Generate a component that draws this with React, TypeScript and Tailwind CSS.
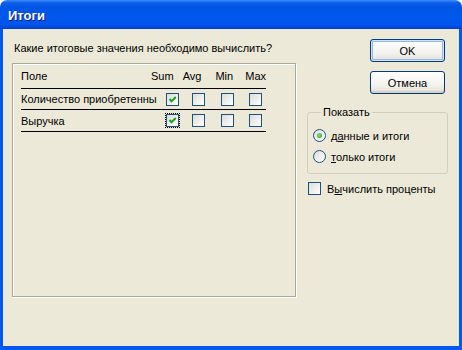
import React from "react";

function Check({ checked, focus }: { checked?: boolean; focus?: boolean }) {
  return (
    <span
      className={
        "flex h-[13px] w-[13px] shrink-0 items-center justify-center border border-[#1C5180] bg-[linear-gradient(135deg,#DCDCD7,#FFFFFF)] " +
        (focus ? "outline-1 outline-dotted outline-black" : "")
      }
    >
      {checked && (
        <svg width="11" height="11" viewBox="0 0 11 11">
          <path d="M2.5 5 L4.5 7.2 L8.8 3" stroke="#21A121" strokeWidth="2" fill="none" />
        </svg>
      )}
    </span>
  );
}

function Radio({ checked }: { checked?: boolean }) {
  return (
    <span className="flex h-[13px] w-[13px] shrink-0 items-center justify-center rounded-full border border-[#1C5180] bg-[linear-gradient(135deg,#DCDCD7,#FFFFFF)]">
      {checked && (
        <span className="h-[5px] w-[5px] rounded-full bg-[radial-gradient(circle_at_40%_40%,#7BE07B,#21A121)]" />
      )}
    </span>
  );
}

const fields = [
  { name: "Количество приобретенны", sum: true, focus: false, h: "h-[21px]" },
  { name: "Выручка", sum: true, focus: true, h: "h-[22px]" },
];

export default function App() {
  return (
    <div className="flex h-[350px] w-[462px] flex-col font-['Liberation_Sans',Arial,sans-serif] text-[11px] text-black">
      {/* title bar */}
      <div className="flex h-[29px] items-center rounded-t-[7px] bg-[linear-gradient(to_bottom,#3D8CFF_0%,#0A5FEA_10%,#0054E3_25%,#0058EE_60%,#0055EA_85%,#0040D0_100%)] pl-[8px] pt-[2px]">
        <span className="text-[13px] font-bold text-white [text-shadow:1px_1px_0_#0A1883]">Итоги</span>
      </div>

      {/* body */}
      <div className="flex flex-1 border-x-[3px] border-b-[4px] border-[#0058EE] bg-[#ECE9D8] pl-[9px] pt-[10px]">
        {/* left side */}
        <div className="flex w-[284px] flex-col">
          <p className="ml-[2px] mt-[2px] h-[22px] leading-[14px]">Какие итоговые значения необходимо вычислить?</p>
          <div className="h-[234px] border border-[#ACA899] pl-[8px] shadow-[inset_1px_1px_0_#fff,1px_1px_0_#fff]">
            <div className="w-[245px]">
              <div className="flex h-[25px] items-center border-b border-black pb-[1px] leading-[14px]">
                <span className="w-[131px]">Поле</span>
                <span className="w-[32px]">Sum</span>
                <span className="w-[33px]">Avg</span>
                <span className="w-[30px]">Min</span>
                <span>Max</span>
              </div>
              {fields.map((f) => (
                <div key={f.name} className={"flex items-center border-b border-black leading-[14px] " + f.h}>
                  <span className="w-[145px] whitespace-nowrap">{f.name}</span>
                  <Check checked={f.sum} focus={f.focus} />
                  <span className="w-[13px]" />
                  <Check />
                  <span className="w-[16px]" />
                  <Check />
                  <span className="w-[15px]" />
                  <Check />
                </div>
              ))}
            </div>
          </div>
        </div>

        {/* right side */}
        <div className="ml-[11px] flex w-[141px] flex-col">
          <button className="ml-[63px] h-[23px] w-[75px] rounded-[3px] border border-[#003C74] bg-[linear-gradient(to_bottom,#FFFFFF,#F4F3EE_60%,#E3E0D6)] leading-[14px] shadow-[inset_0_0_0_1px_#CEE7FF,inset_0_0_0_2px_#98B5EC]">
            OK
          </button>
          <button className="ml-[63px] mt-[9px] h-[23px] w-[75px] rounded-[3px] border border-[#003C74] bg-[linear-gradient(to_bottom,#FFFFFF,#F4F3EE_60%,#E3E0D6)] leading-[14px] shadow-[inset_0_-2px_0_#D6D0C5]">
            Отмена
          </button>

          <fieldset className="mt-[11px] rounded-[3px] border border-[#D0D0BF] pb-[10px] pl-[5px]">
            <legend className="ml-[8px] px-[2px] leading-[14px]">Показать</legend>
            <div className="mt-[10px] flex flex-col gap-[8px]">
              <label className="flex h-[13px] items-center gap-[5px] leading-[14px]">
                <Radio checked />
                <span>
                  д<u>а</u>нные и итоги
                </span>
              </label>
              <label className="flex h-[13px] items-center gap-[5px] leading-[14px]">
                <Radio />
                <span>
                  <u>т</u>олько итоги
                </span>
              </label>
            </div>
          </fieldset>

          <label className="ml-[1px] mt-[8px] flex h-[13px] items-center gap-[6px] leading-[14px]">
            <Check />
            <span>
              В<u>ы</u>числить проценты
            </span>
          </label>
        </div>
      </div>
    </div>
  );
}
